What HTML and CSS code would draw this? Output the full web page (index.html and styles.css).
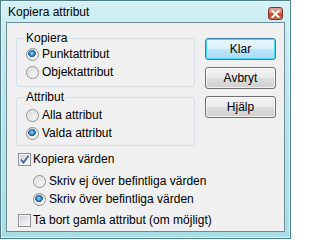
FILE: index.html
```html
<!DOCTYPE html>
<html lang="sv">
<head>
<meta charset="utf-8">
<title>Kopiera attribut</title>
<link rel="stylesheet" href="styles.css">
</head>
<body>
<div class="window">
  <div class="titlebar">
    <span class="title">Kopiera attribut</span>
    <span class="close" aria-label="Stäng">
      <svg width="9" height="8" viewBox="0 0 9 8"><path d="M1.5 1 L7.5 7 M7.5 1 L1.5 7" stroke="#fff" stroke-width="2" stroke-linecap="square"/></svg>
    </span>
  </div>
  <div class="client">
    <div class="left">
      <fieldset class="group g1">
        <legend>Kopiera</legend>
        <div class="opt"><span class="radio on"></span><span>Punktattribut</span></div>
        <div class="opt"><span class="radio"></span><span>Objektattribut</span></div>
      </fieldset>
      <fieldset class="group g2">
        <legend>Attribut</legend>
        <div class="opt"><span class="radio"></span><span>Alla attribut</span></div>
        <div class="opt"><span class="radio on"></span><span>Valda attribut</span></div>
      </fieldset>
      <div class="opt chk-row first"><span class="check on"><svg width="11" height="11" viewBox="0 0 11 11"><path d="M2 5.5 L4.5 8.5 L9.5 1.8" fill="none" stroke="#4a5ea0" stroke-width="1.8"/></svg></span><span>Kopiera värden</span></div>
      <div class="sub">
        <div class="opt"><span class="radio"></span><span>Skriv ej över befintliga värden</span></div>
        <div class="opt"><span class="radio on"></span><span>Skriv över befintliga värden</span></div>
      </div>
      <div class="opt chk-row last"><span class="check"></span><span>Ta bort gamla attribut (om möjligt)</span></div>
    </div>
    <div class="buttons">
      <div class="btn default">Klar</div>
      <div class="btn">Avbryt</div>
      <div class="btn">Hjälp</div>
    </div>
  </div>
</div>
</body>
</html>
```

FILE: styles.css
```css
html, body {
  margin: 0;
  padding: 0;
}
body {
  width: 291px;
  height: 239px;
  overflow: hidden;
  font-family: "Liberation Sans", Arial, sans-serif;
  font-size: 12px;
  color: #000;
}
.window {
  box-sizing: border-box;
  width: 291px;
  height: 239px;
  border: 1px solid #4f7f8c;
  background: linear-gradient(to bottom, #d3f0f5 0%, #bfe7ee 30%, #a9dde5 100%);
  box-shadow: inset 0 0 0 1px rgba(255,255,255,0.55);
  display: flex;
  flex-direction: column;
}
.titlebar {
  height: 21px;
  display: flex;
  align-items: center;
  justify-content: space-between;
  padding-left: 7px;
  padding-right: 7px;
}
.title {
  font-size: 12px;
  line-height: 14px;
  margin-top: 1px;
}
.close {
  box-sizing: border-box;
  width: 15px;
  height: 13px;
  margin-top: 4px;
  border: 1px solid #7a3424;
  border-radius: 3px;
  background: linear-gradient(to bottom, #e9a797 0%, #d7735d 45%, #c2462c 55%, #cf6a4a 100%);
  display: flex;
  align-items: center;
  justify-content: center;
}
.client {
  box-sizing: border-box;
  margin: 0 5px 6px 5px;
  flex: 1;
  border: 1px solid #6b8c97;
  background: #f0f0f0;
  display: grid;
  grid-template-columns: 179px 71px;
  column-gap: 10px;
  padding: 9px 8px 0 9px;
  align-items: start;
}
.left {
  display: flex;
  flex-direction: column;
}
.group {
  margin: 0;
  border: 1px solid #d5dfe5;
  border-radius: 3px;
  padding: 0 6px 5px 9px;
  min-width: 0;
}
.group legend {
  line-height: 13px;
  padding: 0 1px;
  margin-left: -1px;
}
.g2 {
  margin-top: 4px;
  padding-top: 2px;
  padding-bottom: 3px;
}
.opt {
  display: flex;
  align-items: center;
  height: 18px;
  gap: 3px;
  white-space: nowrap;
}
.radio {
  box-sizing: border-box;
  width: 13px;
  height: 13px;
  flex: none;
  border-radius: 50%;
  border: 1px solid #8e8f8f;
  background: radial-gradient(circle at 60% 65%, #f4f4f4 0%, #e2e2e2 55%, #c9c9c9 100%);
  box-shadow: inset 0 0 0 1px rgba(255,255,255,0.6);
}
.radio.on {
  background:
    radial-gradient(circle at 45% 40%, #a6dcfa 0px, #3e8fd2 2px, #1b5695 3.6px, rgba(0,0,0,0) 4px),
    radial-gradient(circle at 60% 65%, #f4f4f4 0%, #e2e2e2 55%, #c9c9c9 100%);
}
.check {
  box-sizing: border-box;
  width: 13px;
  height: 13px;
  flex: none;
  border: 1px solid #8e8f8f;
  background: linear-gradient(135deg, #c9ccd2 0%, #e6e7ea 50%, #fbfbfb 100%);
  box-shadow: inset 0 0 0 1px #f4f4f4;
  display: flex;
  align-items: center;
  justify-content: center;
}
.check svg {
  display: block;
}
.chk-row {
  padding-left: 2px;
  gap: 2px;
}
.chk-row.first {
  margin-top: 4px;
}
.sub {
  padding-left: 17px;
  margin-top: 4px;
}
.chk-row.last {
  margin-top: 3px;
}
.buttons {
  display: flex;
  flex-direction: column;
  gap: 7px;
  padding-top: 6px;
}
.btn {
  box-sizing: border-box;
  height: 22px;
  border: 1px solid #707070;
  border-radius: 3px;
  background: linear-gradient(to bottom, #f2f2f2 0%, #ebebeb 48%, #dddddd 52%, #cfcfcf 100%);
  box-shadow: inset 0 0 0 1px rgba(255,255,255,0.7);
  display: flex;
  align-items: center;
  justify-content: center;
  line-height: 14px;
}
.btn.default {
  border-color: #3c7fb1;
  background: linear-gradient(to bottom, #eaf6fd 0%, #d9f0fc 48%, #bee6fd 52%, #a7d9f5 100%);
  box-shadow: inset 0 0 0 1px #48d7fb;
}
```
